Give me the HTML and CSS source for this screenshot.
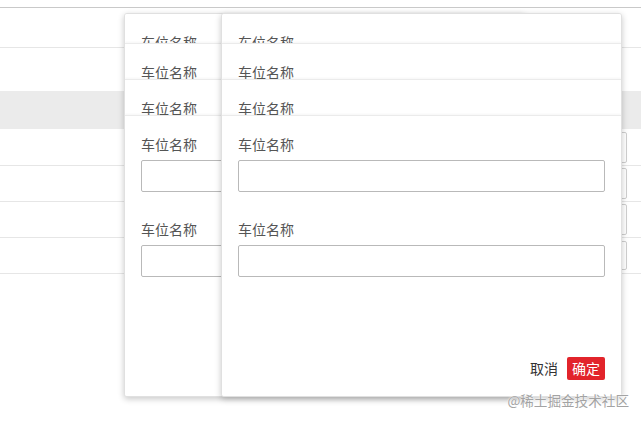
FILE: index.html
```html
<!DOCTYPE html>
<html lang="zh-CN">
<head>
<meta charset="utf-8">
<title>车位</title>
<link rel="stylesheet" href="styles.css">
</head>
<body>
<div class="page">
  <div class="table">
    <div class="row row-a"></div>
    <div class="row row-b"></div>
    <div class="row row-band"></div>
    <div class="row row-c first"><span class="cell-input"></span></div>
    <div class="row row-c"><span class="cell-input"></span></div>
    <div class="row row-c"><span class="cell-input"></span></div>
    <div class="row row-c"><span class="cell-input short"></span></div>
  </div>

  <div class="modal modal-back">
    <div class="layer layer-1"><div class="label">车位名称</div></div>
    <div class="layer layer-2"><div class="label">车位名称</div></div>
    <div class="layer layer-3"><div class="label">车位名称</div></div>
    <div class="layer layer-4">
      <div class="label">车位名称</div>
      <div class="input"></div>
      <div class="label second">车位名称</div>
      <div class="input"></div>
    </div>
  </div>

  <div class="modal modal-front">
    <div class="layer layer-1"><div class="label">车位名称</div></div>
    <div class="layer layer-2"><div class="label">车位名称</div></div>
    <div class="layer layer-3"><div class="label">车位名称</div></div>
    <div class="layer layer-4">
      <div class="label">车位名称</div>
      <div class="input"></div>
      <div class="label second">车位名称</div>
      <div class="input"></div>
      <div class="footer">
        <span class="btn btn-cancel">取消</span>
        <span class="btn btn-ok">确定</span>
      </div>
    </div>
  </div>

  <div class="watermark">@稀土掘金技术社区</div>
</div>
</body>
</html>
```
FILE: styles.css
```css
* { box-sizing: border-box; }
html, body { margin: 0; padding: 0; background: #fff; }
body {
  font-family: "Noto Sans CJK SC", "Noto Sans", sans-serif;
  font-size: 14px;
  color: #555;
}
.page {
  position: relative;
  width: 641px;
  height: 421px;
  overflow: hidden;
}
.table {
  margin-top: 7px;
  border-top: 1px solid #c9c9c9;
}
.row {
  border-bottom: 1px solid #e6e6e6;
  display: flex;
  justify-content: flex-end;
  align-items: center;
}
.row-a { height: 40px; }
.row-b { height: 43px; border-bottom: none; }
.row-band { height: 38px; background: #ebebeb; border-bottom: none; }
.row-c { height: 36px; }
.row-c.first { height: 37px; }
.cell-input {
  display: block;
  width: 200px;
  height: 31px;
  margin-right: 14px;
  border: 1px solid #cfcfcf;
  border-radius: 2px;
}
.cell-input.short { height: 29px; }

.modal {
  position: absolute;
  top: 13px;
  width: 401px;
  height: 384px;
  background: #fff;
  border-radius: 3px;
  border: 1px solid #e0e0e0;
  box-shadow: 0 2px 6px rgba(0, 0, 0, 0.22);
  display: flex;
  flex-direction: column;
  overflow: hidden;
}
.modal-back { left: 124px; }
.modal-front { left: 221px; }

.layer {
  padding: 18px 16px 0;
  overflow: hidden;
  background: #fff;
}
.layer + .layer {
  border-top: 1px solid #ebebeb;
  box-shadow: 0 -1px 2px rgba(0, 0, 0, 0.04);
}
.layer-1 { height: 29px; }
.layer-2 { height: 36px; }
.layer-3 { height: 36px; }
.layer-4 {
  flex: 1;
  display: flex;
  flex-direction: column;
}
.label {
  line-height: 20px;
  font-size: 14px;
  color: #555;
  white-space: nowrap;
}
.label.second { margin-top: 27px; }
.input {
  margin-top: 6px;
  height: 32px;
  border: 1px solid #b9b9b9;
  border-radius: 2px;
  background: #fff;
}
.footer {
  margin-top: auto;
  margin-bottom: 16px;
  display: flex;
  justify-content: flex-end;
  align-items: center;
  gap: 4px;
}
.btn {
  display: inline-block;
  font-size: 14px;
  line-height: 23px;
  height: 23px;
  padding: 0 5px;
  border-radius: 2px;
}
.btn-cancel { color: #333; }
.btn-ok { background: #e2242b; color: #fff; }

.watermark {
  position: absolute;
  right: 12px;
  top: 390px;
  font-size: 13.6px;
  line-height: 20px;
  color: #a3a3a3;
  text-shadow: 0 0 2px #fff, 0 0 1px #fff;
  white-space: nowrap;
}
```
